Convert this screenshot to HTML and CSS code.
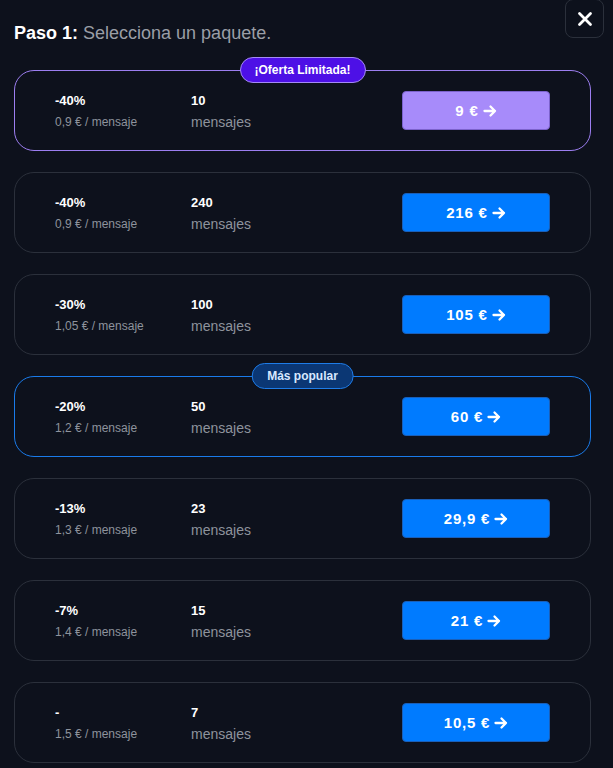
FILE: index.html
```html
<!DOCTYPE html>
<html lang="es">
<head>
<meta charset="utf-8">
<link rel="stylesheet" href="styles.css">
</head>
<body>
<div class="modal">
  <button class="close" aria-label="Cerrar">
    <svg width="16" height="16" viewBox="0 0 16 16"><path d="M2.5 2.5 L13.5 13.5 M13.5 2.5 L2.5 13.5" stroke="#fff" stroke-width="2.8" stroke-linecap="round"/></svg>
  </button>
  <h1 class="title"><strong>Paso 1:</strong> Selecciona un paquete.</h1>
  <div class="list">
    <div class="card card-offer">
      <span class="badge badge-offer">¡Oferta Limitada!</span>
      <div class="col col-disc"><span class="big">-40%</span><span class="small">0,9 € / mensaje</span></div>
      <div class="col col-qty"><span class="big">10</span><span class="unit">mensajes</span></div>
      <button class="buy buy-purple">9 € <svg class="arr" width="14" height="14" viewBox="0 0 14 14"><path d="M1.5 7 H12 M7.5 2.5 L12 7 L7.5 11.5" fill="none" stroke="#fff" stroke-width="2.3" stroke-linecap="round" stroke-linejoin="round"/></svg></button>
    </div>
    <div class="card">
      <div class="col col-disc"><span class="big">-40%</span><span class="small">0,9 € / mensaje</span></div>
      <div class="col col-qty"><span class="big">240</span><span class="unit">mensajes</span></div>
      <button class="buy">216 € <svg class="arr" width="14" height="14" viewBox="0 0 14 14"><path d="M1.5 7 H12 M7.5 2.5 L12 7 L7.5 11.5" fill="none" stroke="#fff" stroke-width="2.3" stroke-linecap="round" stroke-linejoin="round"/></svg></button>
    </div>
    <div class="card">
      <div class="col col-disc"><span class="big">-30%</span><span class="small">1,05 € / mensaje</span></div>
      <div class="col col-qty"><span class="big">100</span><span class="unit">mensajes</span></div>
      <button class="buy">105 € <svg class="arr" width="14" height="14" viewBox="0 0 14 14"><path d="M1.5 7 H12 M7.5 2.5 L12 7 L7.5 11.5" fill="none" stroke="#fff" stroke-width="2.3" stroke-linecap="round" stroke-linejoin="round"/></svg></button>
    </div>
    <div class="card card-popular">
      <span class="badge badge-popular">Más popular</span>
      <div class="col col-disc"><span class="big">-20%</span><span class="small">1,2 € / mensaje</span></div>
      <div class="col col-qty"><span class="big">50</span><span class="unit">mensajes</span></div>
      <button class="buy">60 € <svg class="arr" width="14" height="14" viewBox="0 0 14 14"><path d="M1.5 7 H12 M7.5 2.5 L12 7 L7.5 11.5" fill="none" stroke="#fff" stroke-width="2.3" stroke-linecap="round" stroke-linejoin="round"/></svg></button>
    </div>
    <div class="card">
      <div class="col col-disc"><span class="big">-13%</span><span class="small">1,3 € / mensaje</span></div>
      <div class="col col-qty"><span class="big">23</span><span class="unit">mensajes</span></div>
      <button class="buy">29,9 € <svg class="arr" width="14" height="14" viewBox="0 0 14 14"><path d="M1.5 7 H12 M7.5 2.5 L12 7 L7.5 11.5" fill="none" stroke="#fff" stroke-width="2.3" stroke-linecap="round" stroke-linejoin="round"/></svg></button>
    </div>
    <div class="card">
      <div class="col col-disc"><span class="big">-7%</span><span class="small">1,4 € / mensaje</span></div>
      <div class="col col-qty"><span class="big">15</span><span class="unit">mensajes</span></div>
      <button class="buy">21 € <svg class="arr" width="14" height="14" viewBox="0 0 14 14"><path d="M1.5 7 H12 M7.5 2.5 L12 7 L7.5 11.5" fill="none" stroke="#fff" stroke-width="2.3" stroke-linecap="round" stroke-linejoin="round"/></svg></button>
    </div>
    <div class="card">
      <div class="col col-disc"><span class="big">-</span><span class="small">1,5 € / mensaje</span></div>
      <div class="col col-qty"><span class="big">7</span><span class="unit">mensajes</span></div>
      <button class="buy">10,5 € <svg class="arr" width="14" height="14" viewBox="0 0 14 14"><path d="M1.5 7 H12 M7.5 2.5 L12 7 L7.5 11.5" fill="none" stroke="#fff" stroke-width="2.3" stroke-linecap="round" stroke-linejoin="round"/></svg></button>
    </div>
  </div>
</div>
</body>
</html>
```
FILE: styles.css
```css
html, body {
  margin: 0;
  padding: 0;
  background: #0d111c;
  font-family: "Liberation Sans", Arial, sans-serif;
  color: #fff;
}
.modal {
  position: relative;
  padding: 22px 22px 20px 14px;
}
.close {
  position: absolute;
  top: -1px;
  right: 9px;
  width: 39px;
  height: 39px;
  border: 1px solid #2b303b;
  border-radius: 8px;
  background: #0d111c;
  display: flex;
  align-items: center;
  justify-content: center;
  padding: 0;
}
.title {
  margin: 0;
  font-size: 18px;
  font-weight: normal;
  line-height: 22px;
  color: #9a9ea6;
}
.title strong {
  color: #fff;
  font-weight: bold;
}
.list {
  margin-top: 26px;
  display: flex;
  flex-direction: column;
  gap: 21px;
}
.card {
  position: relative;
  border: 1px solid #2b303b;
  border-radius: 20px;
  padding: 20px 40px;
  display: flex;
  align-items: center;
  height: 39px;
}
.card-offer { border-color: #9c7ef0; }
.card-popular { border-color: #1a7bea; }
.badge {
  position: absolute;
  top: -14px;
  left: 50%;
  transform: translateX(-50%);
  height: 24px;
  line-height: 24px;
  padding: 0 14px;
  border-radius: 13px;
  font-size: 12px;
  font-weight: bold;
  white-space: nowrap;
}
.badge-offer {
  background: #4d10e6;
  border: 1px solid #a48af5;
  color: #fff;
}
.badge-popular {
  background: #0b3774;
  border: 1px solid #1e7ce8;
  color: #d8e8ff;
  padding: 0 15px;
}
.col {
  display: flex;
  flex-direction: column;
  padding-top: 3px;
}
.col-disc { width: 136px; }
.col-qty { flex: 1; }
.big {
  font-size: 13px;
  font-weight: bold;
  line-height: 17px;
  color: #fff;
}
.small {
  font-size: 12px;
  line-height: 20px;
  color: #8e939c;
  margin-top: 3px;
}
.unit {
  font-size: 14px;
  line-height: 20px;
  color: #8e939c;
  margin-top: 3px;
}
.buy {
  width: 148px;
  height: 39px;
  border: 1px solid #1a5fb8;
  border-radius: 4px;
  background: #007bff;
  color: #fff;
  font-family: "Liberation Sans", Arial, sans-serif;
  font-size: 15px;
  font-weight: bold;
  letter-spacing: 0.8px;
  display: flex;
  align-items: center;
  justify-content: center;
  gap: 2px;
  padding: 0;
}
.buy-purple {
  background: #a78bfa;
  border-color: #7c62cc;
}
.arr { margin-left: 2px; }
```
